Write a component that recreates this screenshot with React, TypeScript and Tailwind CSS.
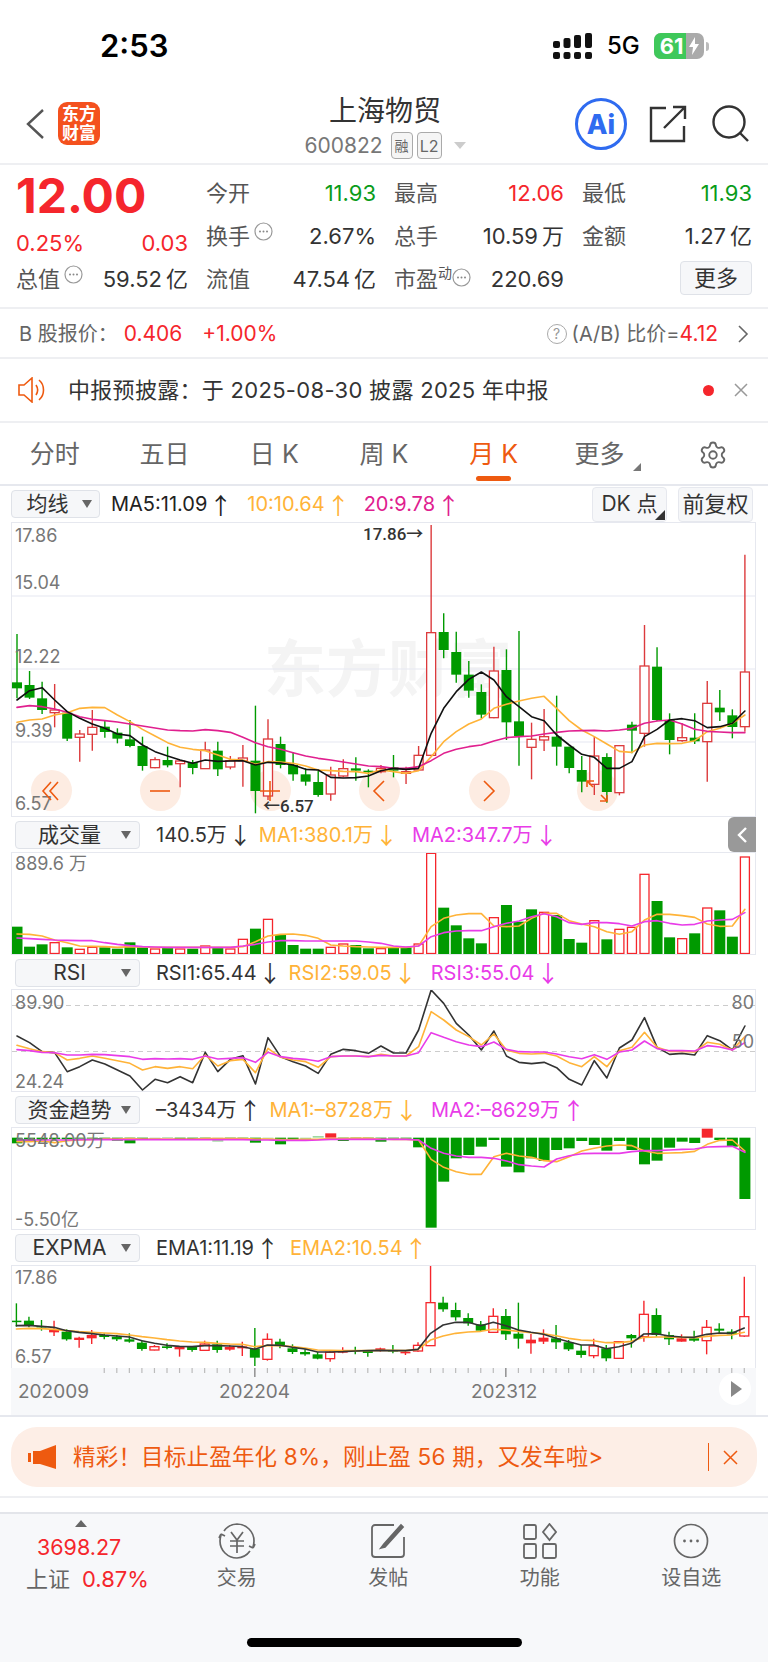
import React from "react";
import { Settings } from "lucide-react";

const X = (i: number) => 17 + 12.55 * i;
const GREEN = "#009a00";
const RED = "#dc3a3c";
const RED2 = "#f5262c";
const ORANGE = "#ffb338";
const MAG = "#e0208f";
const PINK = "#e83ce8";

type C = [string, number, number, number, number];

const mainC: C[] = [
  ["g",342,535,487,505],["g",453,537,495,533],["g",485,582,535,570],["r",492,622,570,578],["g",575,663,578,656],
  ["r",630,725,642,652],["r",570,692,622,643],["g",600,653,620,636],["g",625,670,638,656],["g",600,682,658,678],
  ["g",650,752,678,738],["r",712,745,719,743],["g",680,742,720,736],["r",722,802,723,731],["g",720,763,727,744],
  ["r",665,747,690,746],["g",665,768,692,748],["r",708,748,722,741],["r",675,800,714,722],["g",557,880,722,813],
  ["r",598,840,657,828],["g",650,745,672,735],["g",697,782,735,763],["g",745,797,763,785],["g",752,830,786,825],
  ["r",740,842,765,822],["r",718,772,746,768],["g",712,782,745,752],["g",748,802,752,756],["r",735,760,745,755],
  ["g",705,772,742,752],["r",740,792,755,760],["r",678,750,706,750],["r",15,708,338,706],["g",280,415,336,390],
  ["g",335,488,396,464],["g",423,533,464,512],["g",493,595,516,584],["r",380,595,453,593],["g",388,660,450,607],
  ["g",333,737,604,648],["r",608,778,658,682],["r",567,693,650,660],["g",527,737,650,680],["g",680,760,680,744],
  ["g",708,817,750,785],["r",650,825,708,793],["g",700,848,711,816],["r",675,826,677,818],["g",605,700,614,632],
  ["r",315,680,438,640],["g",382,603,440,600],["g",580,703,600,660],["r",610,665,653,662],["g",580,672,653,664],
  ["r",483,785,550,665],["g",510,603,563,577],["g",568,655,586,621],["r",104,635,456,620],
];
const mainK = [540,512,503,540,575,595,612,625,642,647,675,695,708,720,730,720,724,723,722,735,727,729,735,748,750,772,774,773,768,752,745,748,745,640,565,515,478,456,480,530,560,590,602,645,675,703,712,745,745,725,650,628,600,596,602,623,620,610,573];
const mainO = [607,600,597,585,578,565,562,563,585,605,628,648,668,682,688,692,705,718,720,733,725,726,730,738,750,752,754,755,760,750,755,760,752,710,665,635,612,597,565,553,543,535,529,565,602,630,650,672,694,697,675,670,671,670,662,635,625,610,585];
const mainM = [562,557,560,567,577,590,598,602,606,612,618,624,630,632,633,629,632,637,652,668,680,688,698,708,715,720,726,732,738,740,745,745,740,722,700,688,680,675,663,653,650,648,642,637,633,632,631,633,630,625,610,603,600,612,628,634,636,638,638];

const vol: [string, number][] = [
  ["g",350],["g",410],["g",403],["r",398],["g",412],["r",418],["r",412],["g",412],["g",416],["g",397],
  ["g",412],["r",417],["g",414],["r",417],["g",416],["r",408],["g",414],["r",417],["r",388],["g",356],
  ["r",328],["g",375],["g",405],["g",416],["g",416],["r",412],["r",402],["g",405],["g",415],["r",416],
  ["g",412],["g",412],["r",402],["r",130],["g",293],["g",346],["g",385],["g",400],["r",323],["g",285],
  ["g",335],["g",298],["r",307],["g",315],["g",387],["g",398],["r",332],["g",388],["r",358],["r",352],
  ["r",193],["g",273],["g",382],["r",386],["g",370],["r",294],["g",301],["g",380],["r",141],
];
const volO = [372,373,378,390,398,408,409,410,412,410,411,412,412,412,412,412,412,412,410,395,378,373,372,376,385,405,408,410,411,412,412,412,408,350,325,315,311,311,348,350,348,325,310,310,332,342,350,365,373,365,330,313,313,317,322,342,349,348,298];
const volM = [384,386,388,390,391,392,392,398,403,407,410,411,412,412,412,412,412,412,408,403,396,392,392,393,393,393,393,393,396,400,408,411,408,380,368,363,362,362,350,340,333,320,311,320,338,343,338,338,341,348,335,332,340,345,343,333,330,328,308];

const rsiK = [678,698,725,728,785,770,750,762,780,798,840,808,818,800,818,727,785,748,737,822,683,740,755,768,790,733,718,722,730,708,729,729,660,540,580,640,675,720,663,738,757,761,757,773,808,825,752,804,714,690,623,712,733,730,735,677,692,720,648];
const rsiO = [706,716,725,728,750,745,738,745,752,760,780,770,775,770,776,735,768,752,748,788,715,742,750,755,772,740,738,738,740,733,738,738,710,605,630,660,680,705,672,720,730,732,730,738,758,770,740,770,722,712,667,712,724,724,726,697,703,720,680];
const rsiM = [719,722,727,728,735,735,733,734,737,740,748,746,747,746,748,738,747,745,743,757,727,740,745,748,754,740,738,738,740,736,738,738,728,668,682,695,705,710,696,718,725,726,726,732,740,746,734,748,726,720,693,716,722,722,723,707,711,720,698];

const fund: [string, number, number][] = [
  ["g",143,160],["g",143,156],["g",143,150],["g",143,147],["g",143,148],["g",143,146],["g",143,146],["g",143,146],["g",143,152],["g",143,160],
  ["g",143,150],["p",143,147],["p",141,143],["g",143,147],["g",143,147],["g",143,146],["p",143,155],["g",143,148],["g",143,148],["g",143,158],
  ["p",143,146],["g",143,163],["g",143,152],["p",143,150],["p",138,143],["r",130,143],["g",143,153],["g",143,146],["g",143,146],["g",143,155],
  ["g",143,146],["g",143,146],["g",143,172],["g",143,413],["g",143,275],["g",143,205],["g",143,195],["g",143,170],["g",143,150],["g",143,230],
  ["g",143,247],["g",143,205],["g",143,213],["g",143,180],["g",143,175],["g",143,153],["g",143,165],["g",143,182],["g",143,153],["g",143,180],
  ["g",143,223],["g",143,212],["g",143,173],["g",143,155],["g",143,159],["r",116,143],["g",143,150],["g",143,170],["g",143,327],
];
const fundO = [155,155,153,158,152,150,148,147,147,146,147,147,147,147,147,146,146,146,146,147,147,149,149,148,148,146,146,145,145,147,148,148,150,208,232,245,253,253,200,190,198,202,212,215,200,183,175,168,165,167,183,190,189,188,184,163,151,150,183];
const fundM = [150,150,150,150,150,149,149,149,149,149,149,149,149,149,149,149,149,149,149,150,150,151,151,151,150,148,148,148,148,148,148,148,150,175,190,198,202,202,205,213,224,228,231,207,197,191,190,190,190,185,182,182,180,178,177,171,170,169,187];

const emaC: C[] = [
  ["g",640,710,692,696],["g",680,712,692,705],["g",690,722,708,712],["R",692,738,717,727],["g",718,752,725,748],
  ["R",740,773,743,750],["R",720,762,735,745],["g",730,748,735,741],["g",735,753,740,748],["g",730,758,748,755],
  ["g",750,782,758,777],["r",765,781,770,780],["g",760,778,769,774],["R",768,800,771,778],["g",768,785,771,780],
  ["r",752,782,762,781],["g",752,788,763,780],["R",765,782,771,779],["R",755,798,769,775],["g",714,828,776,803],
  ["r",730,812,748,808],["g",746,775,755,768],["g",763,792,775,786],["g",778,797,786,793],["g",786,808,793,806],
  ["r",780,815,787,806],["R",772,790,782,788],["g",770,793,780,783],["g",782,800,783,789],["R",773,785,775,782],
  ["g",765,790,780,784],["R",782,795,785,790],["r",757,785,766,783],["r",528,768,638,767],["g",620,665,638,658],
  ["g",638,692,660,682],["g",670,707,684,700],["g",693,725,703,722],["r",655,728,679,727],["g",657,750,678,733],
  ["g",638,776,731,746],["R",732,791,749,760],["R",718,762,743,755],["g",705,777,745,757],["g",750,783,757,778],
  ["g",765,803,782,795],["r",746,805,768,797],["g",765,814,775,805],["r",755,805,755,805],["g",732,773,735,745],
  ["r",632,755,673,740],["g",655,740,675,735],["g",725,765,735,748],["R",733,755,745,755],["g",722,755,745,752],
  ["r",690,793,712,752],["g",700,730,716,722],["g",718,748,725,733],["r",560,740,680,738],
];
const emaK = [707,706,709,712,722,727,731,735,738,741,752,760,766,769,770,767,767,768,770,778,765,766,772,777,786,786,785,783,782,781,782,782,778,730,705,697,697,707,697,707,720,727,733,745,755,765,765,776,770,760,732,731,738,741,742,733,729,730,714];
const emaO = [717,715,716,718,722,725,727,729,731,735,740,744,749,753,756,757,760,762,763,770,767,767,770,774,780,781,782,782,782,781,781,782,778,750,738,730,726,724,718,720,724,728,731,737,745,750,752,758,758,754,742,741,741,742,743,739,736,735,727];

function Line({ d, y0, color, dx = 0, w = 1.6 }: { d: number[]; y0: number; color: string; dx?: number; w?: number }) {
  return (
    <polyline
      fill="none"
      stroke={color}
      strokeWidth={w}
      strokeLinejoin="round"
      strokeLinecap="round"
      points={d.map((v, i) => `${X(i) + dx},${y0 + v / 3}`).join(" ")}
    />
  );
}

function Candles({ data, y0, dx = 0, red = RED }: { data: C[]; y0: number; dx?: number; red?: string }) {
  return (
    <>
      {data.map(([c, hi, lo, t, b], i) => {
        const x = X(i) + dx;
        const solid = c === "g" || c === "R";
        const col = c === "g" ? GREEN : c === "R" ? RED2 : red;
        return (
          <g key={i}>
            <line x1={x} x2={x} y1={y0 + hi / 3} y2={y0 + lo / 3} stroke={col} strokeWidth={1.4} />
            <rect
              x={x - (solid ? 5 : 4.5)}
              width={solid ? 10 : 9}
              y={y0 + t / 3}
              height={Math.max((b - t) / 3, 1.5)}
              fill={solid ? col : "#fff"}
              stroke={solid ? "none" : col}
              strokeWidth={solid ? 0 : 1.3}
            />
          </g>
        );
      })}
    </>
  );
}

function Panel({ top, h, children, labels, bottom = true }: { top: number; h: number; children: React.ReactNode; labels?: React.ReactNode; bottom?: boolean }) {
  return (
    <div className={`relative w-[745px] border-x border-t border-[#e6e8ef] bg-white overflow-hidden ${bottom ? "border-b" : ""}`} style={{ height: h }}>
      {labels}
      <svg className="relative z-[1] block" width={743} height={h - 1} viewBox={`12 ${top + 1} 743 ${h - 1}`}>
        {children}
      </svg>
    </div>
  );
}

function AxisLabel({ className, children }: { className: string; children: React.ReactNode }) {
  return <span className={`absolute z-10 text-[18px] leading-none text-[#777] ${className}`}>{children}</span>;
}

function Tri({ className = "" }: { className?: string }) {
  return <span className={`inline-block h-0 w-0 border-x-[5px] border-t-[8px] border-x-transparent border-t-[#666] ${className}`} />;
}

function SelectBox({ label, w, ml }: { label: string; w: number; ml: number }) {
  return (
    <div
      className="relative flex h-[28px] shrink-0 items-center justify-center rounded-[4px] border border-[#dfe2e8] bg-[#f6f7f9] pr-[16px] text-[21px] text-[#333]"
      style={{ width: w, marginLeft: ml }}
    >
      {label}
      <Tri className="absolute right-[8px] top-[9px]" />
    </div>
  );
}

function Arrowed({ t }: { t: string }) {
  return (
    <>
      {t.slice(0, -1)}
      <span className="ml-[2px] font-['Noto_Sans_CJK_SC',sans-serif] text-[23px] leading-none">{t.slice(-1)}</span>
    </>
  );
}

function Legend({ items, children }: { items: [string, string, number][]; children: React.ReactNode }) {
  return (
    <div className="flex h-[35px] items-center">
      {children}
      <div className="ml-[16px] flex items-center text-[20px] leading-none">
        {items.map(([t, c, mr], i) => (
          <span key={i} className="flex items-center whitespace-nowrap" style={{ color: c, marginRight: mr }}>
            <Arrowed t={t} />
          </span>
        ))}
      </div>
    </div>
  );
}

function Dots({ className = "" }: { className?: string }) {
  return (
    <svg width="19" height="19" viewBox="0 0 19 19" className={className}>
      <circle cx="9.5" cy="9.5" r="8.5" fill="none" stroke="#999" strokeWidth="1.2" />
      <circle cx="6" cy="9.5" r="1" fill="#888" />
      <circle cx="9.5" cy="9.5" r="1" fill="#888" />
      <circle cx="13" cy="9.5" r="1" fill="#888" />
    </svg>
  );
}

function Cell({ k, v, c = "#333", dots, sup }: { k: string; v: string; c?: string; dots?: boolean; sup?: boolean }) {
  return (
    <div className="flex items-center justify-between whitespace-nowrap">
      <span className="relative flex items-center text-[22px] text-[#555]">
        {k}
        {sup && <span className="-mt-[14px] text-[14px] text-[#555]">动</span>}
        {dots && <Dots className={sup ? "-mt-[4px]" : "-mt-[10px] ml-[4px]"} />}
      </span>
      <span className="text-[22px]" style={{ color: c }}>{v}</span>
    </div>
  );
}

function RoundBtn({ cx, children }: { cx: number; children: React.ReactNode }) {
  return (
    <div className="absolute top-[247px] flex h-[41px] w-[41px] items-center justify-center rounded-full bg-[#fdece2]" style={{ left: cx - 12 - 20.5 }}>
      <span className="relative z-10 flex">{children}</span>
    </div>
  );
}

const OS = { fill: "none", stroke: "#ee5a10", strokeWidth: 1.6 };

function FootItem({ icon, label }: { icon: React.ReactNode; label: string }) {
  return (
    <div className="flex flex-col items-center">
      <div className="flex h-[38px] items-center justify-center">{icon}</div>
      <span className="mt-[4px] text-[20px] leading-[28px] text-[#666]">{label}</span>
    </div>
  );
}

export default function App() {
  return (
    <div className="h-[1662px] w-[768px] overflow-hidden bg-white font-['Inter','Noto_Sans_CJK_SC',sans-serif] text-[#333]">
      {/* status bar */}
      <div className="flex h-[85px] items-start pl-[100px] pt-[28px]">
        <span className="w-[67px] text-[31px] font-semibold leading-[36px] text-black">2:53</span>
        <div className="ml-[386px] mt-[5px] flex items-center">
          <svg width="40" height="26" viewBox="0 0 40 26" fill="#111">
            <rect x="0" y="8" width="7" height="7" rx="2" />
            <rect x="0" y="19" width="7" height="7" rx="2" />
            <rect x="10.5" y="5" width="7" height="10" rx="2" />
            <rect x="10.5" y="19" width="7" height="7" rx="2" />
            <rect x="21" y="2" width="7" height="13" rx="2" />
            <rect x="21" y="19" width="7" height="7" rx="2" />
            <rect x="32" y="0" width="7" height="15" rx="2" />
            <rect x="32" y="19" width="7" height="7" rx="2" />
          </svg>
          <span className="ml-[14px] text-[24px] font-medium leading-none text-black">5G</span>
          <div className="ml-[14px] flex h-[26px] w-[50px] items-center overflow-hidden rounded-[7px] bg-[#aaa]">
            <div className="flex h-full w-[32px] items-center justify-start bg-[#3fc85a] pl-[6px]">
              <span className="text-[22px] font-bold leading-none text-white">61</span>
            </div>
            <svg width="14" height="20" viewBox="0 0 14 20" className="ml-[1px]" fill="#fff">
              <path d="M8 1 2 11h4l-1 8 7-11H8z" />
            </svg>
          </div>
          <span className="ml-[2px] h-[9px] w-[3px] rounded-r bg-[#bbb]" />
        </div>
      </div>

      {/* header */}
      <div className="relative flex h-[80px] items-start border-b-2 border-[#eeeff2]">
        <svg width="20" height="30" viewBox="0 0 20 30" className="ml-[25px] mt-[24px] shrink-0">
          <path d="M18 1 3 15l15 14" fill="none" stroke="#555" strokeWidth="2.4" />
        </svg>
        <div className="ml-[13px] mt-[17px] flex h-[43px] w-[42px] shrink-0 flex-col items-center justify-center rounded-[9px] bg-[#f4511e] text-[17px] font-bold leading-[19px] text-white">
          <span>东方</span>
          <span>财富</span>
        </div>
        <div className="ml-[200px] mt-[8px] flex w-[170px] shrink-0 flex-col items-center">
          <span className="text-[28px] leading-[36px] text-[#333]">上海物贸</span>
          <div className="mt-[3px] flex items-center">
            <span className="text-[21px] leading-none text-[#777]">600822</span>
            <span className="ml-[8px] flex h-[27px] w-[22px] items-center justify-center rounded-[4px] border border-[#aaa] bg-[#f5f5f5] text-[14px] text-[#666]">融</span>
            <span className="ml-[4px] flex h-[27px] w-[25px] items-center justify-center rounded-[4px] border border-[#aaa] bg-[#f5f5f5] text-[16px] text-[#666]">L2</span>
            <span className="ml-[12px] h-0 w-0 border-x-[6px] border-t-[7px] border-x-transparent border-t-[#ccc]" />
          </div>
        </div>
        <div className="ml-[105px] mt-[13px] flex h-[52px] w-[52px] shrink-0 items-center justify-center rounded-full border-[3px] border-[#2f6bf0] text-[27px] font-extrabold leading-none text-[#2f6bf0]">
          Ai
        </div>
        <svg width="38" height="38" viewBox="0 0 38 38" className="ml-[22px] mt-[20px] shrink-0" fill="none" stroke="#333" strokeWidth="2.4">
          <path d="M17 3H2v33h33V21" />
          <path d="M15 23 35 3M24 2h12v12" />
        </svg>
        <svg width="38" height="38" viewBox="0 0 38 38" className="ml-[25px] mt-[20px] shrink-0" fill="none" stroke="#333" strokeWidth="2.4">
          <circle cx="17" cy="17" r="15.5" />
          <path d="m28 28 8 8" />
        </svg>
      </div>

      {/* quote */}
      <div className="flex h-[144px] border-b-2 border-[#eeeff2] pl-[16px] pt-[7px]">
        <div className="w-[172px] shrink-0">
          <div className="flex h-[48px] items-center text-[48px] font-bold leading-none text-[#f5262c]">12.00</div>
          <div className="flex h-[46px] items-center justify-between text-[22px] text-[#f5262c]">
            <span>0.25%</span>
            <span>0.03</span>
          </div>
          <div className="flex h-[26px] items-center justify-between whitespace-nowrap">
            <span className="flex items-center text-[22px] text-[#555]">总值<Dots className="-mt-[10px] ml-[4px]" /></span>
            <span className="text-[22px] text-[#333]">59.52{"\u2009"}亿</span>
          </div>
        </div>
        <div className="ml-[18px] grid w-[546px] shrink-0 grid-cols-3 gap-x-[18px] [grid-template-rows:42px_44px_42px]">
          <Cell k="今开" v="11.93" c="#0a9c1a" />
          <Cell k="最高" v="12.06" c="#f5262c" />
          <Cell k="最低" v="11.93" c="#0a9c1a" />
          <Cell k="换手" v="2.67%" dots />
          <Cell k="总手" v={"10.59\u2009万"} />
          <Cell k="金额" v={"1.27\u2009亿"} />
          <Cell k="流值" v={"47.54\u2009亿"} />
          <Cell k="市盈" v="220.69" dots sup />
          <div className="flex items-center justify-end">
            <span className="-mt-[2px] flex h-[34px] w-[72px] items-center justify-center rounded-[4px] border border-[#dfe2e8] bg-[#f6f7f9] text-[22px] text-[#333]">更多</span>
          </div>
        </div>
      </div>

      {/* B row */}
      <div className="flex h-[50px] items-center border-b-2 border-[#eeeff2] pl-[19px] pr-[19px] pt-[2px] text-[20px] text-[#666]">
        <span>B 股报价：</span>
        <span className="ml-[6px] text-[21px] text-[#f5262c]">0.406</span>
        <span className="ml-[20px] text-[21px] text-[#f5262c]">+1.00%</span>
        <span className="ml-auto flex h-[20px] w-[20px] items-center justify-center rounded-full border border-[#aaa] text-[14px] leading-none text-[#999]">?</span>
        <span className="ml-[5px]">(A/B) 比价=</span>
        <span className="text-[21px] text-[#f5262c]">4.12</span>
        <svg width="12" height="20" viewBox="0 0 12 20" className="ml-[19px]">
          <path d="m2 2 8 8-8 8" fill="none" stroke="#666" strokeWidth="1.6" />
        </svg>
      </div>

      {/* notice */}
      <div className="flex h-[64px] items-center border-b-2 border-[#eeeff2] pl-[18px] pr-[20px]">
        <svg width="30" height="26" viewBox="0 0 30 26" fill="none" stroke="#ee5a10" strokeWidth="1.6">
          <path d="M1 8v10h5l8 7V1L6 8z" />
          <path d="M18 8c2 3 2 7 0 10M21 3c6 5 6 15 0 20" />
        </svg>
        <span className="ml-[20px] text-[22px] tracking-[0.3px] text-[#333]">中报预披露：于 2025-08-30 披露 2025 年中报</span>
        <span className="ml-auto h-[11px] w-[11px] rounded-full bg-[#f5262c]" />
        <svg width="14" height="14" viewBox="0 0 14 14" className="ml-[20px]">
          <path d="m1 1 12 12M13 1 1 13" stroke="#999" strokeWidth="1.5" />
        </svg>
      </div>

      {/* tabs */}
      <div className="grid h-[63px] grid-cols-7 items-center border-b-2 border-[#e6e8ee] pt-[3px] text-[25px] text-[#666]">
        <span className="text-center">分时</span>
        <span className="text-center">五日</span>
        <span className="text-center">日 K</span>
        <span className="text-center">周 K</span>
        <span className="relative flex h-full items-center justify-center text-[#ee5a10]">
          月 K
          <span className="absolute bottom-[3px] h-[5px] w-[35px] rounded-full bg-[#ee5a10]" />
        </span>
        <span className="relative -left-[4px] text-center">
          更多
          <span className="absolute left-[88px] top-[27px] h-0 w-0 border-b-[8px] border-l-[8px] border-b-[#777] border-l-transparent" />
        </span>
        <span className="flex justify-center">
          <Settings size={30} strokeWidth={1.5} color="#666" />
        </span>
      </div>

      {/* chart section */}
      <div className="relative pl-[11px]">
        <div className="flex h-[36px] items-center">
          <div className="relative flex h-[28px] w-[89px] shrink-0 items-center justify-center rounded-[4px] border border-[#dfe2e8] bg-[#f6f7f9] pr-[16px] text-[21px] text-[#333]">
            均线
            <Tri className="absolute right-[7px] top-[9px]" />
          </div>
          <div className="ml-[11px] flex items-center whitespace-nowrap text-[20px] leading-none">
            <span className="mr-[15px] flex items-center text-[#222]"><Arrowed t="MA5:11.09↑" /></span>
            <span className="mr-[14px] flex items-center text-[#ffb338]"><Arrowed t="10:10.64↑" /></span>
            <span className="flex items-center text-[#e0208f]"><Arrowed t="20:9.78↑" /></span>
          </div>
          <div className="relative ml-auto mr-[3px] flex h-[35px] w-[75px] items-center justify-center rounded-[4px] border border-[#e6e8ee] bg-[#f6f7f9] text-[21px] text-[#333]">
            DK 点
            <span className="absolute bottom-[1px] right-[1px] h-0 w-0 border-b-[10px] border-l-[10px] border-b-[#333] border-l-transparent" />
          </div>
          <div className="mr-[15px] ml-[8px] flex h-[35px] w-[75px] items-center justify-center rounded-[4px] border border-[#e6e8ee] bg-[#f6f7f9] text-[22px] text-[#333]">
            前复权
          </div>
        </div>

        <Panel
          top={522}
          h={295}
          labels={
            <>
              <AxisLabel className="left-[3px] top-[4px]">17.86</AxisLabel>
              <AxisLabel className="left-[3px] top-[51px]">15.04</AxisLabel>
              <AxisLabel className="left-[3px] top-[125px]">12.22</AxisLabel>
              <AxisLabel className="left-[3px] top-[199px]">9.39</AxisLabel>
              <AxisLabel className="left-[3px] top-[272px]">6.57</AxisLabel>
              <span className="absolute left-[252px] top-[116px] whitespace-nowrap text-[62px] font-bold leading-none text-[#f4f4f4]">东方财富</span>
              <span className="absolute left-[351px] top-[1px] z-10 font-['Roboto','Noto_Sans_CJK_SC',sans-serif] text-[17px] font-medium leading-[20px] text-[#333]">17.86→</span>
              <span className="absolute left-[251px] top-[273px] z-10 font-['Roboto','Noto_Sans_CJK_SC',sans-serif] text-[17px] font-medium leading-[20px] text-[#333]">←6.57</span>
              <RoundBtn cx={51}>
                <svg width="20" height="20" viewBox="0 0 20 20" {...OS}><path d="M10 1 2 10l8 9M17 1l-8 9 8 9" /></svg>
              </RoundBtn>
              <RoundBtn cx={160}>
                <svg width="20" height="20" viewBox="0 0 20 20" {...OS}><path d="M0 10h20" /></svg>
              </RoundBtn>
              <RoundBtn cx={270}>
                <svg width="20" height="20" viewBox="0 0 20 20" {...OS}><path d="M0 10h20M10 0v20" /></svg>
              </RoundBtn>
              <RoundBtn cx={379}>
                <svg width="14" height="22" viewBox="0 0 14 22" {...OS}><path d="M12 1 2 11l10 10" /></svg>
              </RoundBtn>
              <RoundBtn cx={489}>
                <svg width="14" height="22" viewBox="0 0 14 22" {...OS}><path d="m2 1 10 10-10 10" /></svg>
              </RoundBtn>
              <RoundBtn cx={597}>
                <svg width="22" height="22" viewBox="0 0 22 22" {...OS}><path d="M1 7V1h7M1 1l6 6M21 15v6h-7M21 21l-6-6" /></svg>
              </RoundBtn>
            </>
          }
        >
          {[596, 669, 742].map((y) => (
            <line key={y} x1="12" x2="755" y1={y} y2={y} stroke="#e6e8f2" strokeWidth="1.2" />
          ))}
          <Candles data={mainC} y0={520} />
          <Line d={mainO} y0={520} color={ORANGE} />
          <Line d={mainM} y0={520} color={MAG} />
          <Line d={mainK} y0={520} color="#111" />
        </Panel>

        <div className="relative">
          <Legend items={[["140.5万↓", "#333", 7], ["MA1:380.1万↓", "#ffb338", 14], ["MA2:347.7万↓", "#e83ce8", 0]]}>
            <SelectBox label="成交量" w={125} ml={4} />
          </Legend>
          <div className="absolute right-[12px] top-0 flex h-[35px] w-[28px] items-center justify-center rounded-l-[6px] bg-[#999]">
            <svg width="12" height="18" viewBox="0 0 12 18"><path d="M10 2 3 9l7 7" fill="none" stroke="#fff" strokeWidth="2.4" /></svg>
          </div>
        </div>

        <Panel
          top={852}
          h={103}
          labels={<AxisLabel className="left-[3px] top-[2px]">889.6 万</AxisLabel>}
        >
          {vol.map(([c, t], i) => {
            const y = 810 + t / 3;
            return c === "g" ? (
              <rect key={i} x={X(i) - 5.5} y={y} width={11} height={954 - y} fill={GREEN} />
            ) : (
              <rect key={i} x={X(i) - 4.5} y={y} width={9} height={953.5 - y} fill="#fff" stroke={RED2} strokeWidth={1.3} />
            );
          })}
          <Line d={volO} y0={810} color={ORANGE} />
          <Line d={volM} y0={810} color={PINK} />
        </Panel>

        <div className="h-[34px] overflow-hidden">
          <Legend items={[["RSI1:65.44↓", "#333", 7], ["RSI2:59.05↓", "#ffb338", 14], ["RSI3:55.04↓", "#e83ce8", 0]]}>
            <SelectBox label="RSI" w={125} ml={4} />
          </Legend>
        </div>

        <Panel
          top={989}
          h={103}
          labels={
            <>
              <AxisLabel className="left-[3px] top-[4px]">89.90</AxisLabel>
              <AxisLabel className="left-[3px] top-[83px]">24.24</AxisLabel>
              <AxisLabel className="right-[1px] top-[4px]">80</AxisLabel>
              <AxisLabel className="right-[1px] top-[43px]">50</AxisLabel>
            </>
          }
        >
          <line x1="12" x2="755" y1="1005.5" y2="1005.5" stroke="#ccc" strokeWidth="1.2" strokeDasharray="5 4" />
          <line x1="12" x2="755" y1="1051.5" y2="1051.5" stroke="#ccc" strokeWidth="1.2" strokeDasharray="5 4" />
          <Line d={rsiK} y0={810} color="#333" />
          <Line d={rsiO} y0={810} color={ORANGE} />
          <Line d={rsiM} y0={810} color={PINK} />
        </Panel>

        <Legend items={[["–3434万↑", "#333", 8], ["MA1:–8728万↓", "#ffb338", 13], ["MA2:–8629万↑", "#e83ce8", 0]]}>
          <SelectBox label="资金趋势" w={125} ml={4} />
        </Legend>

        <Panel
          top={1127}
          h={103}
          labels={
            <>
              <AxisLabel className="left-[3px] top-[4px]">5548.00万</AxisLabel>
              <AxisLabel className="left-[3px] top-[83px]">-5.50亿</AxisLabel>
            </>
          }
        >
          {fund.map(([c, t, b], i) => (
            <rect
              key={i}
              x={X(i) - 5.5}
              y={1090 + t / 3}
              width={11}
              height={(b - t) / 3}
              fill={c === "g" ? GREEN : c === "r" ? RED2 : c === "p" ? "#9fd8a0" : GREEN}
            />
          ))}
          <Line d={fundO} y0={1090} color={ORANGE} />
          <Line d={fundM} y0={1090} color={PINK} />
        </Panel>

        <Legend items={[["EMA1:11.19↑", "#333", 11], ["EMA2:10.54↑", "#ffb338", 0]]}>
          <SelectBox label="EXPMA" w={125} ml={4} />
        </Legend>

        <Panel
          top={1265}
          h={103}
          bottom={false}
          labels={
            <>
              <AxisLabel className="left-[3px] top-[3px]">17.86</AxisLabel>
              <AxisLabel className="left-[3px] top-[82px]">6.57</AxisLabel>
            </>
          }
        >
          <Candles data={emaC} y0={1090} dx={-0.6} red={RED2} />
          <Line d={emaO} y0={1090} color={ORANGE} dx={-0.6} />
          <Line d={emaK} y0={1090} color="#333" dx={-0.6} />
        </Panel>

        {/* time axis */}
        <div className="relative flex h-[47px] w-[745px] flex-col bg-[#f7f8fa]">
          <svg width="745" height="10" viewBox="11 1367 745 10" className="block">
            {mainC.map((_, i) =>
              X(i) > 100 ? <line key={i} x1={X(i) - 0.6} x2={X(i) - 0.6} y1="1367" y2={i === 19 || i === 39 ? 1376 : 1372} stroke={i === 19 || i === 39 ? "#777" : "#bbb"} strokeWidth="1.2" /> : null
            )}
          </svg>
          <div className="relative mt-[1px] flex-1 text-[19px] leading-[26px] text-[#777]">
            <span className="absolute left-[7px] top-0">202009</span>
            <span className="absolute left-[208px] top-0">202204</span>
            <span className="absolute left-[460px] top-0">202312</span>
          </div>
          <div className="absolute right-[5px] top-[5px] flex h-[32px] w-[32px] items-center justify-center rounded-full bg-white">
            <span className="ml-[3px] h-0 w-0 border-y-[8px] border-l-[11px] border-y-transparent border-l-[#888]" />
          </div>
        </div>
      </div>

      <div className="h-[2px] bg-[#e6e8ee]" />

      {/* promo */}
      <div className="h-[81px] border-b-2 border-[#eeeff2] px-[11px] pt-[10px]">
        <div className="flex h-[60px] w-[746px] items-center rounded-[26px] bg-[#fdeee6] pl-[17px] pr-[19px]">
          <svg width="28" height="24" viewBox="0 0 28 24" fill="#ee5a10">
            <rect x="0" y="8" width="3" height="9" />
            <rect x="5" y="6" width="7" height="13" />
            <path d="M12 6 28 0v24l-16-5z" />
          </svg>
          <span className="ml-[17px] text-[22.5px] leading-none tracking-[0.2px] text-[#ee5a10]">精彩！目标止盈年化 8%，刚止盈 56 期，又发车啦&gt;</span>
          <span className="ml-auto h-[28px] w-px bg-[#ee5a10]" />
          <svg width="15" height="15" viewBox="0 0 15 15" className="ml-[14px]">
            <path d="m1 1 13 13M14 1 1 14" stroke="#ee5a10" strokeWidth="1.5" />
          </svg>
        </div>
      </div>

      <div className="h-[14px]" />

      {/* footer */}
      <div className="relative h-[150px] border-t-2 border-[#e3e5ea] bg-[#f7f8fa]">
        <div className="grid grid-cols-[161px_repeat(4,151.5px)]">
          <div className="relative flex flex-col items-start pl-[26px] pt-[6px]">
            <span className="absolute left-[75px] top-[6px] h-0 w-0 border-x-[6px] border-b-[7px] border-x-transparent border-b-[#666]" />
            <span className="ml-[11px] mt-[13px] text-[21.5px] leading-[28px] text-[#f5262c]">3698.27</span>
            <div className="mt-[4px] flex items-center whitespace-nowrap text-[22px] leading-[28px]">
              <span className="text-[#666]">上证</span>
              <span className="ml-[12px] text-[#f5262c]">0.87%</span>
            </div>
          </div>
          <div className="pt-[8px]">
            <FootItem
              label="交易"
              icon={
                <svg width="38" height="38" viewBox="0 0 38 38" fill="none" stroke="#666" strokeWidth="1.7">
                  <path d="M6 9a17 17 0 0 1 13-7 17 17 0 0 1 17 17c0 2-.4 4-1 6M32 29a17 17 0 0 1-13 7A17 17 0 0 1 2 19c0-2 .4-4 1-6" />
                  <path d="M35 26l2-4M35 26l-4-2M3 12 1 16M3 12l4 2" />
                  <path d="m13 10 6 8 6-8M12 19h14M12 24h14M19 18v13" />
                </svg>
              }
            />
          </div>
          <div className="pt-[8px]">
            <FootItem
              label="发帖"
              icon={
                <svg width="36" height="36" viewBox="0 0 36 36" fill="none" stroke="#666" strokeWidth="1.8">
                  <path d="M24 2H5a3 3 0 0 0-3 3v26a3 3 0 0 0 3 3h26a3 3 0 0 0 3-3V14" />
                  <path d="m11 25 4-1L33 4l-2-2-17 19z" fill="#666" />
                </svg>
              }
            />
          </div>
          <div className="pt-[8px]">
            <FootItem
              label="功能"
              icon={
                <svg width="34" height="36" viewBox="0 0 34 36" fill="none" stroke="#666" strokeWidth="1.8">
                  <rect x="1" y="2" width="12" height="14" rx="1.5" />
                  <rect x="1" y="21" width="12" height="14" rx="1.5" />
                  <rect x="20" y="21" width="13" height="14" rx="1.5" />
                  <path d="m26.5 1 6.5 8-6.5 8L20 9z" />
                </svg>
              }
            />
          </div>
          <div className="pt-[8px]">
            <FootItem
              label="设自选"
              icon={
                <svg width="36" height="36" viewBox="0 0 36 36" fill="none" stroke="#666" strokeWidth="1.7">
                  <circle cx="18" cy="18" r="16.5" />
                  <circle cx="11.5" cy="18" r="1.4" fill="#666" stroke="none" />
                  <circle cx="18" cy="18" r="1.4" fill="#666" stroke="none" />
                  <circle cx="24.5" cy="18" r="1.4" fill="#666" stroke="none" />
                </svg>
              }
            />
          </div>
        </div>
        <div className="absolute bottom-[15px] left-[247px] h-[9px] w-[275px] rounded-full bg-black" />
      </div>
    </div>
  );
}
